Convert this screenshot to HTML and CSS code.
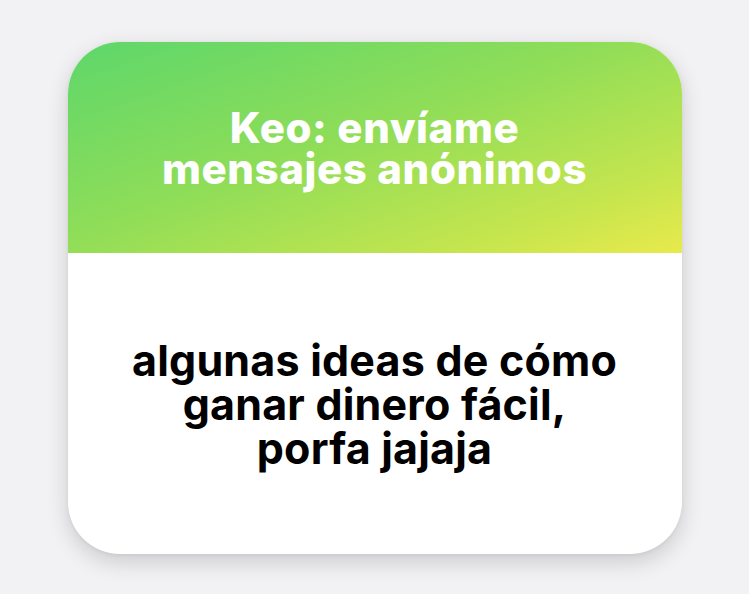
FILE: index.html
```html
<!DOCTYPE html>
<html lang="es">
<head>
<meta charset="utf-8">
<link rel="stylesheet" href="styles.css">
</head>
<body>
<div class="page">
  <div class="card">
    <div class="card-head">
      <p class="head-text">Keo: envíame<br>mensajes anónimos</p>
    </div>
    <div class="card-body">
      <p class="body-text">algunas ideas de cómo<br>ganar dinero fácil,<br>porfa jajaja</p>
    </div>
  </div>
</div>
</body>
</html>
```
FILE: styles.css
```css
html, body {
  margin: 0;
  padding: 0;
  background: #f2f1f3;
}
.page {
  width: 749px;
  height: 594px;
  display: flex;
  justify-content: center;
  padding-top: 42px;
  box-sizing: border-box;
  font-family: Inter, "Liberation Sans", Arial, sans-serif;
}
.card {
  width: 614px;
  height: 512px;
  border-radius: 52px;
  overflow: hidden;
  background: #ffffff;
  box-shadow: 0 8px 22px rgba(0, 0, 0, 0.16), 0 1px 4px rgba(0, 0, 0, 0.06);
  display: flex;
  flex-direction: column;
}
.card-head {
  height: 211px;
  flex: none;
  background: linear-gradient(160deg, #5dd76b 0%, #8fdd58 45%, #c4e54e 80%, #e8ea4c 100%);
  display: flex;
  align-items: center;
  justify-content: center;
}
.head-text {
  margin: 0;
  color: #ffffff;
  font-weight: 800;
  font-size: 42px;
  line-height: 41px;
  text-align: center;
  letter-spacing: 0.6px;
}
.card-body {
  flex: 1;
  display: flex;
  align-items: center;
  justify-content: center;
}
.body-text {
  margin: 0;
  color: #000000;
  font-weight: 700;
  font-size: 43px;
  line-height: 44px;
  text-align: center;
  letter-spacing: 0.2px;
}
```
